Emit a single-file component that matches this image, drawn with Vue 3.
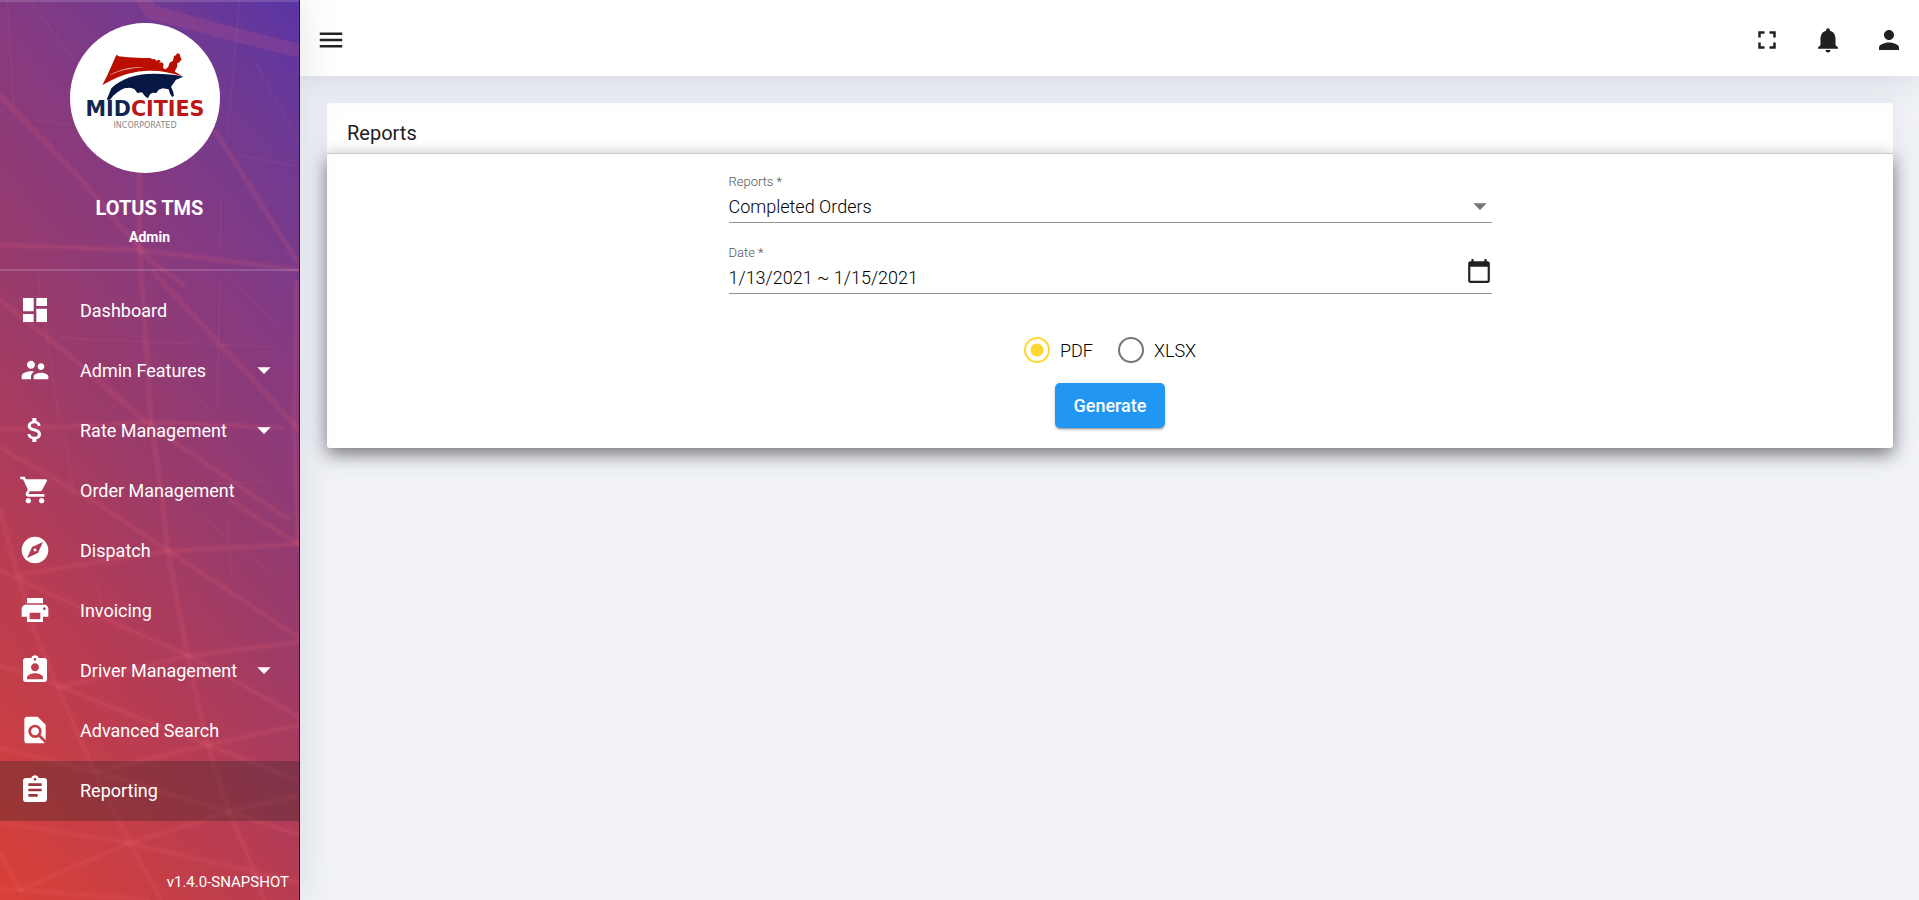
<script setup>
import { ref } from 'vue'

const icons = {
  dashboard: 'M3 13h8V3H3v10zm0 8h8v-6H3v6zm10 0h8V11h-8v10zm0-18v6h8V3h-8z',
  people: 'M16.5 12c1.38 0 2.49-1.12 2.49-2.5S17.88 7 16.5 7 14 8.12 14 9.5s1.12 2.5 2.5 2.5zM9 11c1.66 0 2.99-1.34 2.99-3S10.66 5 9 5 6 6.34 6 8s1.34 3 3 3zm7.5 3c-1.83 0-5.5.92-5.5 2.75V19h11v-2.25c0-1.83-3.67-2.75-5.5-2.75zM9 13c-2.33 0-7 1.17-7 3.5V19h7v-2.25c0-.85.33-2.34 2.37-3.47C10.5 13.1 9.66 13 9 13z',
  dollar: 'M11.8 10.9c-2.27-.59-3-1.2-3-2.15 0-1.09 1.01-1.85 2.7-1.85 1.78 0 2.44.85 2.5 2.1h2.21c-.07-1.72-1.12-3.3-3.21-3.81V3h-3v2.16c-1.94.42-3.5 1.68-3.5 3.61 0 2.31 1.91 3.46 4.7 4.13 2.5.6 3 1.48 3 2.41 0 .69-.49 1.79-2.7 1.79-2.06 0-2.87-.92-2.98-2.1h-2.2c.12 2.19 1.76 3.42 3.68 3.83V21h3v-2.15c1.95-.37 3.5-1.5 3.5-3.55 0-2.84-2.43-3.81-4.7-4.4z',
  cart: 'M7 18c-1.1 0-1.99.9-1.99 2S5.9 22 7 22s2-.9 2-2-.9-2-2-2zM1 2v2h2l3.6 7.59-1.35 2.45c-.16.28-.25.61-.25.96 0 1.1.9 2 2 2h12v-2H7.42c-.14 0-.25-.11-.25-.25l.03-.12.9-1.63h7.45c.75 0 1.41-.41 1.75-1.03l3.58-6.49c.08-.14.12-.31.12-.48 0-.55-.45-1-1-1H5.21l-.94-2H1zm16 16c-1.1 0-1.99.9-1.99 2s.89 2 1.99 2 2-.9 2-2-.9-2-2-2z',
  compass: 'M12 10.9c-.61 0-1.1.49-1.1 1.1s.49 1.1 1.1 1.1c.61 0 1.1-.49 1.1-1.1s-.49-1.1-1.1-1.1zM12 2C6.48 2 2 6.48 2 12s4.48 10 10 10 10-4.48 10-10S17.52 2 12 2zm2.19 12.19L6 18l3.81-8.19L18 6l-3.81 8.19z',
  print: 'M19 8H5c-1.66 0-3 1.34-3 3v6h4v4h12v-4h4v-6c0-1.66-1.34-3-3-3zm-3 11H8v-5h8v5zm3-7c-.55 0-1-.45-1-1s.45-1 1-1 1 .45 1 1-.45 1-1 1zm-1-9H6v4h12V3z',
  badge: 'M19 3h-4.18C14.4 1.84 13.3 1 12 1c-1.3 0-2.4.84-2.82 2H5c-1.1 0-2 .9-2 2v14c0 1.1.9 2 2 2h14c1.1 0 2-.9 2-2V5c0-1.1-.9-2-2-2zm-7 0c.55 0 1 .45 1 1s-.45 1-1 1-1-.45-1-1 .45-1 1-1zm0 4c1.66 0 3 1.34 3 3s-1.34 3-3 3-3-1.34-3-3 1.34-3 3-3zm6 12H6v-1.4c0-2 4-3.1 6-3.1s6 1.1 6 3.1V19z',
  search: 'M20 19.59V8l-6-6H6c-1.1 0-1.99.9-1.99 2L4 20c0 1.1.89 2 1.99 2H18c.45 0 .85-.15 1.19-.4l-4.43-4.43c-.8.52-1.74.83-2.76.83-2.76 0-5-2.24-5-5s2.24-5 5-5 5 2.24 5 5c0 1.02-.31 1.96-.83 2.75L20 19.59zM9 13c0 1.66 1.34 3 3 3s3-1.34 3-3-1.34-3-3-3-3 1.34-3 3z',
  clipboard: 'M19 3h-4.18C14.4 1.84 13.3 1 12 1c-1.3 0-2.4.84-2.82 2H5c-1.1 0-2 .9-2 2v14c0 1.1.9 2 2 2h14c1.1 0 2-.9 2-2V5c0-1.1-.9-2-2-2zm-7 0c.55 0 1 .45 1 1s-.45 1-1 1-1-.45-1-1 .45-1 1-1zm2 14H7v-2h7v2zm3-4H7v-2h10v2zm0-4H7V7h10v2z',
  menu: 'M3 18h18v-2H3v2zm0-5h18v-2H3v2zm0-7v2h18V6H3z',
  fullscreen: 'M7 14H5v5h5v-2H7v-3zm-2-4h2V7h3V5H5v5zm12 7h-3v2h5v-5h-2v3zM14 5v2h3v3h2V5h-5z',
  bell: 'M12 22c1.1 0 2-.9 2-2h-4c0 1.1.89 2 2 2zm6-6v-5c0-3.07-1.64-5.64-4.5-6.32V4c0-.83-.67-1.5-1.5-1.5s-1.5.67-1.5 1.5v.68C7.63 5.36 6 7.92 6 11v5l-2 2v1h16v-1l-2-2z',
  person: 'M12 12c2.21 0 4-1.79 4-4s-1.79-4-4-4-4 1.79-4 4 1.79 4 4 4zm0 2c-2.67 0-8 1.34-8 4v2h16v-2c0-2.66-5.33-4-8-4z',
  calendar: 'M20 3h-1V1h-2v2H7V1H5v2H4c-1.1 0-2 .9-2 2v16c0 1.1.9 2 2 2h16c1.1 0 2-.9 2-2V5c0-1.1-.9-2-2-2zm0 18H4V8h16v13z',
}

const items = [
  { label: 'Dashboard', icon: 'dashboard' },
  { label: 'Admin Features', icon: 'people', menu: true },
  { label: 'Rate Management', icon: 'dollar', menu: true },
  { label: 'Order Management', icon: 'cart' },
  { label: 'Dispatch', icon: 'compass' },
  { label: 'Invoicing', icon: 'print' },
  { label: 'Driver Management', icon: 'badge', menu: true },
  { label: 'Advanced Search', icon: 'search' },
  { label: 'Reporting', icon: 'clipboard', active: true },
]

const actions = [
  { label: 'Full screen', icon: 'fullscreen' },
  { label: 'Notifications', icon: 'bell' },
  { label: 'Account', icon: 'person' },
]

const beams = [
  'M0 95L75 172 150 260 185 285',
  'M140 172L140 250 152 425 163 500 168 550 188 655 208 745 230 812 255 872 265 900',
  'M215 130L300 265',
  'M0 245L140 250 300 270',
  'M0 299L75 360 150 425 290 520',
  'M152 270L300 430',
  'M0 430L150 422 285 428',
  'M0 447L100 505 168 550 300 638',
  'M230 500L300 545',
  'M0 508L18 575 35 630 57 685 95 772 130 843 162 900',
  'M18 575L168 551 300 544',
  'M0 570L90 612 188 655 270 700 300 718',
  'M188 656L300 642',
  'M0 665L57 685 208 745 300 781',
  'M57 688L188 656',
  'M95 772L208 745 300 725',
  'M0 748L95 772 230 812 300 835',
  'M130 843L230 812 300 795',
  'M0 822L130 843 255 872 300 882',
  'M0 853L22 892',
  'M20 890L130 843',
  'M0 888L22 890 150 900',
  'M297 280L295 425 298 545',
]
const threads = [
  'M8 0L14 105', 'M30 0L75 60', 'M240 0L228 135', 'M255 60L298 140', 'M35 120L130 132',
  'M240 155L295 166', 'M37 270L60 420', 'M60 338L275 347', 'M220 280L218 410', 'M230 275L280 330',
  'M65 435L75 500', 'M150 355L210 410', 'M228 520L232 580', 'M95 570L102 610', 'M200 515L270 573', 'M215 483L270 482', 'M222 191L221 248', 'M0 200L22 232',
]

const report = ref('Completed Orders')
const date = ref('1/13/2021 ~ 1/15/2021')
const format = ref('PDF')
</script>

<template>
  <div class="shell">
    <aside class="sidebar">
      <svg class="backdrop" viewBox="0 0 300 900" preserveAspectRatio="xMidYMid slice" aria-hidden="true">
        <path class="beam wide" d="M140 -5L152 12 225 32 305 52" />
        <path v-for="d in beams" :key="d" class="beam" :d="d" />
        <path v-for="d in beams" :key="'c' + d" class="core" :d="d" />
        <path v-for="d in threads" :key="d" class="thread" :d="d" />
      </svg>
      <div class="profile">
        <svg class="avatar" viewBox="210 69 450 450" role="img" aria-label="Midcities Incorporated">
          <circle cx="435" cy="294" r="225" fill="#fff" />
          <path fill="#b90e00" d="M348 167l4-3 3 5 30 3 40 2h26l6 4 8-1 3 5 10-3 4 5-5 5 8-2 6 5-2 12 8 4 8-8 4-12 10-6 3-14 6-2 3-6 8 2 3 11 3 5-7 9-6 3-1 12-5 8-1 5 22 14c-40-13-75-19-112-16-54 3-89 21-128 42l15-29z" />
          <path fill="#fff" d="M330 224c34-18 63-23 103-23-45 5-75 11-103 25z" opacity=".6" />
          <path fill="#061743" d="M320 299l14-34c28-28 72-44 126-44 36 0 66 2 90 9l-22 9-9 13-6 8 6 14 3 13-5 4-7-10-4-13-18-3-12 4-7 10-11-1-8 5-6 12-9-6-9-12-14 2-9-12-13-4-17 2c-16 8-30 17-43 34z" />
          <text x="435" y="347" text-anchor="middle" class="brand"><tspan fill="#102650">MID</tspan><tspan fill="#bd1715">CITIES</tspan></text>
          <text x="435" y="384" text-anchor="middle" class="brand-sub">INCORPORATED</text>
        </svg>
        <h1>LOTUS TMS</h1>
        <p>Admin</p>
      </div>
      <nav>
        <a v-for="item in items" :key="item.label" href="#" :class="{ active: item.active }">
          <svg class="nav-icon" viewBox="0 0 24 24" aria-hidden="true"><path :d="icons[item.icon]" /></svg>
          <span>{{ item.label }}</span>
          <svg v-if="item.menu" class="nav-arrow" viewBox="0 0 24 24" aria-hidden="true"><path d="M7 10l5 5 5-5z" /></svg>
        </a>
      </nav>
      <footer>v1.4.0-SNAPSHOT</footer>
    </aside>

    <div class="page">
      <header class="topbar">
        <button type="button" aria-label="Toggle menu"><svg viewBox="0 0 24 24"><path :d="icons.menu" /></svg></button>
        <div class="actions">
          <button v-for="a in actions" :key="a.label" type="button" :aria-label="a.label">
            <svg viewBox="0 0 24 24"><path :d="icons[a.icon]" /></svg>
          </button>
        </div>
      </header>

      <main>
        <section class="card">
          <h2>Reports</h2>
          <form class="panel" @submit.prevent>
            <div class="fields">
              <div class="field">
                <label for="report">Reports *</label>
                <div class="control">
                  <select id="report" v-model="report"><option>Completed Orders</option></select>
                  <svg class="caret" viewBox="0 0 24 24" aria-hidden="true"><path d="M7 10l5 5 5-5z" /></svg>
                </div>
              </div>
              <div class="field">
                <label for="date">Date *</label>
                <div class="control">
                  <input id="date" v-model="date" type="text">
                  <button type="button" class="calendar" aria-label="Open calendar"><svg viewBox="0 0 24 24"><path :d="icons.calendar" /></svg></button>
                </div>
              </div>
            </div>
            <div class="radios">
              <label><input v-model="format" type="radio" name="format" value="PDF">PDF</label>
              <label><input v-model="format" type="radio" name="format" value="XLSX">XLSX</label>
            </div>
            <button type="submit" class="generate">Generate</button>
          </form>
        </section>
      </main>
    </div>
  </div>
</template>

<style>
body {
  background: #f1f3f8;
}
</style>

<style scoped>
.shell {
  display: flex;
  min-height: 100vh;
  font-family: Roboto, "Liberation Sans", sans-serif;
  font-size: 18px;
  color: #212121;
}
.shell * {
  box-sizing: border-box;
}
svg {
  display: block;
  fill: currentColor;
}
button {
  padding: 0;
  border: 0;
  background: none;
  color: inherit;
  font: inherit;
  cursor: pointer;
}
.sidebar {
  position: relative;
  z-index: 2;
  flex: none;
  display: flex;
  flex-direction: column;
  width: 300px;
  border-right: 1px solid #2b1a30;
  background: linear-gradient(50deg, #d94036 0%, #b53c54 30%, #993b6b 50%, #863a80 70%, #723a90 85%, #5a35a5 100%);
  box-shadow: 0 0 35px rgba(154, 161, 171, 0.3);
  color: #fff;
}
.backdrop {
  position: absolute;
  inset: 0;
  width: 100%;
  height: 100%;
  fill: none;
}
.beam {
  stroke: #f0607a;
  stroke-width: 7;
  stroke-opacity: 0.09;
}
.beam.wide {
  stroke-width: 14;
  stroke-opacity: 0.16;
}
.core {
  stroke: #ff7a70;
  stroke-width: 2;
  stroke-opacity: 0.08;
}
.thread {
  stroke: #f58080;
  stroke-width: 2;
  stroke-opacity: 0.07;
}
.profile {
  position: relative;
  display: flex;
  flex-direction: column;
  align-items: center;
  height: 271px;
  padding-top: 21px;
  border-top: 2px solid rgba(255, 255, 255, 0.14);
  border-bottom: 2px solid rgba(255, 255, 255, 0.15);
}
.avatar {
  width: 150px;
  height: 150px;
  margin-right: 9px;
}
.brand {
  font: bold 62px "DejaVu Sans", sans-serif;
}
.brand-sub {
  font: 24px "DejaVu Sans", sans-serif;
  fill: #888;
}
.profile h1 {
  margin: 20px 0 0;
  font-size: 20px;
  font-weight: 700;
  line-height: 30px;
}
.profile p {
  margin: 3px 0 0;
  font-size: 14px;
  font-weight: 700;
  line-height: 22px;
}
nav {
  position: relative;
  padding-top: 10px;
}
nav a {
  display: flex;
  align-items: center;
  height: 60px;
  padding: 0 19px 2px 19px;
  color: #fff;
  text-decoration: none;
}
nav a.active {
  background: rgba(33, 33, 33, 0.3);
}
.nav-icon {
  width: 32px;
  height: 32px;
  margin-right: 29px;
}
.nav-arrow {
  width: 32px;
  height: 32px;
  margin-left: auto;
}
.sidebar footer {
  position: relative;
  margin-top: auto;
  padding: 0 10px 8px;
  font-size: 15px;
  line-height: 20px;
  text-align: right;
}
.page {
  flex: 1;
  min-width: 0;
}
.topbar {
  position: relative;
  z-index: 1;
  display: flex;
  align-items: center;
  justify-content: space-between;
  height: 76px;
  padding: 4px 15px 0 16px;
  background: #fff;
  box-shadow: 0 0 35px rgba(154, 161, 171, 0.4);
}
.topbar svg {
  width: 30px;
  height: 30px;
}
.actions {
  display: flex;
  gap: 31px;
}
main {
  padding: 27px 26px 27px 27px;
}
.card {
  border-radius: 3px;
  background: #fff;
  box-shadow: 0 0 35px rgba(154, 161, 190, 0.18);
}
.card h2 {
  margin: 0;
  padding: 15px 20px 5px;
  font-size: 20px;
  font-weight: 400;
  line-height: 30px;
}
.panel {
  display: flex;
  flex-direction: column;
  align-items: center;
  padding: 16px 20px 20px;
  border-top: 1px solid #ccc;
  border-radius: 0 0 3px 3px;
  background: #fff;
  box-shadow: 0 6px 18px rgba(0, 0, 0, 0.5);
  font-weight: 300;
}
.fields {
  width: 50%;
}
.field {
  height: 53px;
  margin-bottom: 18px;
  border-bottom: 1px solid #949494;
}
.field label {
  display: block;
  font-size: 13px;
  line-height: 24px;
  color: #555;
}
.control {
  position: relative;
  display: flex;
  align-items: center;
  height: 24px;
}
.control select,
.control input {
  width: 100%;
  height: 24px;
  padding: 0;
  border: 0;
  outline: 0;
  background: none;
  color: #000;
  font: inherit;
  appearance: none;
}
.caret {
  position: absolute;
  right: -4px;
  width: 32px;
  height: 32px;
  color: #757575;
  pointer-events: none;
}
.calendar {
  position: absolute;
  right: 0;
  bottom: 5px;
}
.calendar svg {
  width: 26px;
  height: 26px;
}
.radios {
  display: flex;
  gap: 25px;
  margin-top: 25px;
  color: #000;
}
.radios label {
  display: flex;
  align-items: center;
  gap: 10px;
  height: 26px;
}
.radios input {
  width: 26px;
  height: 26px;
  margin: 0;
  border: 2px solid #757575;
  border-radius: 50%;
  appearance: none;
}
.radios input:checked {
  border-color: #fdd835;
  background: radial-gradient(circle, #fdd835 6px, transparent 7px);
}
.generate {
  width: 110px;
  height: 45px;
  margin-top: 20px;
  border-radius: 5px;
  background: #2196f3;
  box-shadow: 0 3px 1px -2px rgba(0, 0, 0, 0.2), 0 2px 2px rgba(0, 0, 0, 0.14), 0 1px 5px rgba(0, 0, 0, 0.12);
  color: #fff;
  font-weight: 500;
}
</style>
